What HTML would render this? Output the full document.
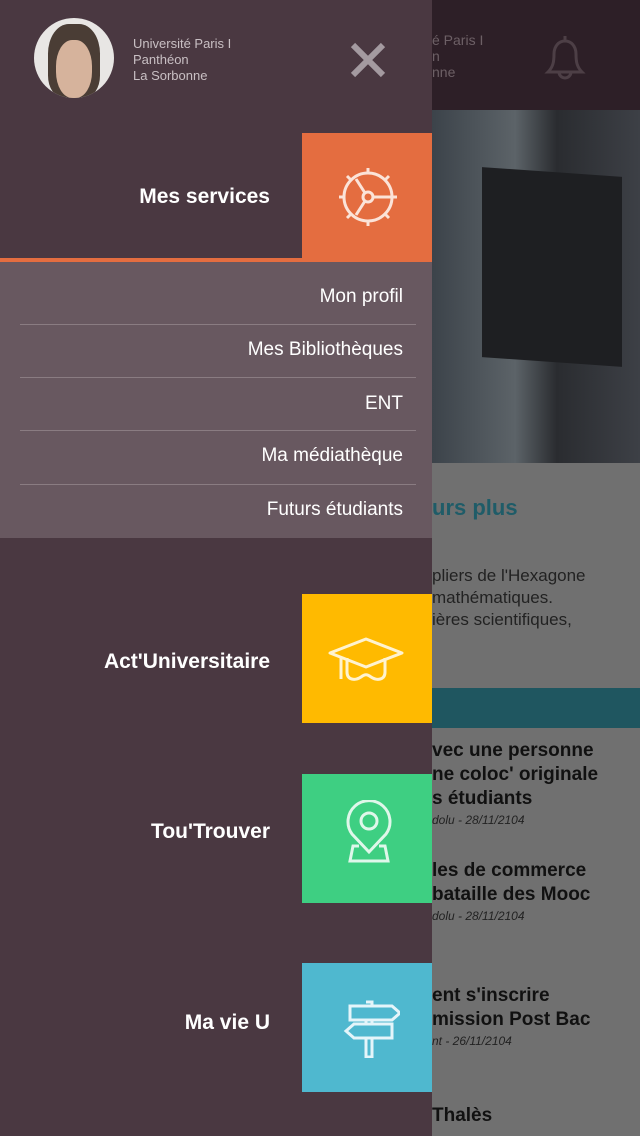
<!DOCTYPE html>
<html><head><meta charset="utf-8"><style>
*{margin:0;padding:0;box-sizing:border-box}
body{width:640px;height:1136px;overflow:hidden;position:relative;background:#707070;font-family:"Liberation Sans",sans-serif}
.abs{position:absolute}
.drawer{left:0;top:0;width:432px;height:1136px;background:#4a3841}
.t{color:#fff;font-weight:bold;font-size:21px;text-align:right;right:370px;white-space:nowrap}
.sub{color:#fff;font-size:19px;right:237px;white-space:nowrap}
.sep{left:20px;width:396px;height:1px;background:#8a7c82}
.rt{color:#111;font-weight:bold;font-size:19px;left:432px;line-height:24px;white-space:nowrap}
.rs{color:#222;font-style:italic;font-size:12px;left:432px}
</style></head><body>
<div class="abs" style="left:432px;top:0;width:208px;height:110px;background:#2d1f27"></div>
<div class="abs" style="left:432px;top:32px;color:#6d6066;font-size:14px;line-height:16px">é Paris I<br>n<br>nne</div>
<svg class="abs" style="left:540px;top:32px" width="50" height="52" viewBox="0 0 50 52"><path d="M25 4v5M8 40c5-5 6-10 6-18 0-8 5-13 11-13s11 5 11 13c0 8 1 13 6 18z M19 40a6 6 0 0 0 12 0" fill="none" stroke="#4d3f46" stroke-width="3"/></svg>
<div class="abs" style="left:432px;top:110px;width:208px;height:353px;background:linear-gradient(90deg,#3c434a,#5c6368 40%,#2a2c30 60%,#3d4046)"></div>
<div class="abs" style="left:482px;top:172px;width:140px;height:190px;background:#1e1f22;transform:skewY(4deg)"></div>
<div class="abs" style="left:432px;top:495px;color:#1f5c68;font-weight:bold;font-size:22px">urs plus</div>
<div class="abs" style="left:432px;top:565px;color:#222;font-size:17px;line-height:22px">pliers de l'Hexagone<br>mathématiques.<br>ières scientifiques,</div>
<div class="abs" style="left:432px;top:688px;width:208px;height:40px;background:#1f5660"></div>
<div class="abs rt" style="top:739px">vec une personne<br>ne coloc' originale<br>s étudiants</div>
<div class="abs rs" style="top:813px">dolu - 28/11/2104</div>
<div class="abs rt" style="top:859px">les de commerce<br>bataille des Mooc</div>
<div class="abs rs" style="top:909px">dolu - 28/11/2104</div>
<div class="abs rt" style="top:984px">ent s'inscrire<br>mission Post Bac</div>
<div class="abs rs" style="top:1034px">nt - 26/11/2104</div>
<div class="abs rt" style="top:1104px">Thalès</div>

<div class="abs drawer"></div>
<div class="abs" style="left:34px;top:18px;width:80px;height:80px;border-radius:50%;background:#e8e6e4;overflow:hidden">
 <div class="abs" style="left:14px;top:6px;width:52px;height:74px;border-radius:40% 40% 30% 30%;background:#4a3d35"></div>
 <div class="abs" style="left:22px;top:22px;width:36px;height:58px;border-radius:45%;background:#d6b39c"></div>
</div>
<div class="abs" style="left:133px;top:36px;color:#c8bfc3;font-size:13px;line-height:16px">Université Paris I<br>Panthéon<br>La Sorbonne</div>
<svg class="abs" style="left:350px;top:42px" width="36" height="36"><path d="M3 3L33 33M33 3L3 33" stroke="#a49aa0" stroke-width="6"/></svg>

<div class="abs" style="left:302px;top:133px;width:130px;height:129px;background:#e46d40"></div>
<div class="abs" style="left:0;top:258px;width:432px;height:4px;background:#e46d40"></div>
<svg class="abs" style="left:337px;top:166px" width="62" height="62" viewBox="0 0 62 62"><g fill="none" stroke="#fbe3d8" stroke-width="3"><circle cx="31" cy="31" r="24"/><circle cx="31" cy="31" r="5"/><path d="M36 31H54M28 27L19 13M28 35L19 49"/><path d="M31 2v5M31 55v5M2 31h5M55 31h5M10 10l4 4M48 48l4 4M52 10l-4 4M10 52l4-4"/></g></svg>
<div class="abs t" style="top:185px">Mes services</div>

<div class="abs" style="left:0;top:262px;width:432px;height:276px;background:#685860"></div>
<div class="abs sub" style="top:286px">Mon profil</div>
<div class="abs sep" style="top:324px"></div>
<div class="abs sub" style="top:339px">Mes Bibliothèques</div>
<div class="abs sep" style="top:377px"></div>
<div class="abs sub" style="top:393px">ENT</div>
<div class="abs sep" style="top:430px"></div>
<div class="abs sub" style="top:445px">Ma médiathèque</div>
<div class="abs sep" style="top:484px"></div>
<div class="abs sub" style="top:499px">Futurs étudiants</div>

<div class="abs" style="left:302px;top:594px;width:130px;height:129px;background:#ffba00"></div>
<svg class="abs" style="left:328px;top:636px" width="80" height="50" viewBox="0 0 80 50"><g fill="none" stroke="#fff3d0" stroke-width="3" stroke-linejoin="round"><path d="M2 17L38 3L74 17L38 31Z"/><path d="M13 21v22M19 22v14c0 8 8 9 14 5c4-3 6-3 10 0c6 4 14 3 14-5V22"/></g></svg>
<div class="abs t" style="top:650px">Act'Universitaire</div>

<div class="abs" style="left:302px;top:774px;width:130px;height:129px;background:#3ecf82"></div>
<svg class="abs" style="left:338px;top:800px" width="62" height="66" viewBox="0 0 62 66"><g fill="none" stroke="#dff7ea" stroke-width="3"><path d="M31 52L14 34A21 21 0 1 1 48 34Z"/><circle cx="31" cy="21" r="8"/><path d="M21 46h-6l-3 15h38l-3-15h-6"/></g></svg>
<div class="abs t" style="top:820px">Tou'Trouver</div>

<div class="abs" style="left:302px;top:963px;width:130px;height:129px;background:#4fb8cf"></div>
<svg class="abs" style="left:342px;top:1000px" width="58" height="58" viewBox="0 0 58 58"><g fill="none" stroke="#e4f5fa" stroke-width="3"><path d="M24 2h6v4M8 6h42l8 7-8 7H8Z"/><path d="M50 24H12l-8 7 8 7h38Z"/><path d="M24 20v4M30 20v4M24 38v19h6V38"/></g></svg>
<div class="abs t" style="top:1011px">Ma vie U</div>
</body></html>
